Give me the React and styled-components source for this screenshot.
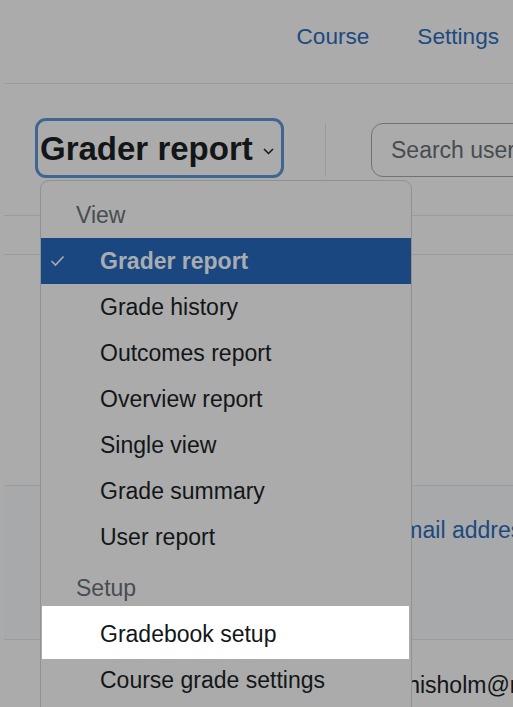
import React from "react";
import styled, { createGlobalStyle } from "styled-components";

const Global = createGlobalStyle`
  html, body { margin: 0; padding: 0; background: #ababab; overflow: hidden; }
  body { font-family: "Liberation Sans", Arial, sans-serif; color: #131618; }
  * { box-sizing: border-box; }
`;

const Page = styled.div`
  margin-left: 4px;
  width: 509px;
  height: 707px;
  overflow: hidden;
  position: relative;
`;

const NavBar = styled.nav`
  height: 84px;
  border-bottom: 1px solid #9a9b9c;
  display: flex;
  justify-content: flex-end;
  align-items: flex-start;
  gap: 48px;
  padding: 20px 14px 0 0;
`;

const NavLink = styled.a`
  font-size: 22.6px;
  line-height: 33px;
  color: #1c4a80;
  text-decoration: none;
`;

const ToolBar = styled.div`
  height: 132px;
  border-bottom: 1px solid #9a9b9c;
  display: flex;
  align-items: flex-start;
  padding: 34px 0 0 31px;
`;

const SelectorWrap = styled.div`
  position: relative;
  flex: none;
`;

const SelectorButton = styled.button`
  width: 249px;
  height: 60px;
  border: 3px solid #3f6693;
  border-radius: 11px;
  background: transparent;
  display: flex;
  align-items: center;
  padding: 0 4px 0 2px;
  font-family: inherit;
  cursor: pointer;
`;

const SelectorLabel = styled.span`
  font-size: 33px;
  font-weight: 700;
  line-height: 39px;
  color: #131618;
  white-space: nowrap;
`;

const Chevron = styled.svg`
  margin-left: auto;
  width: 11px;
  height: 7px;
  margin-top: 6px;
  margin-right: 3px;
`;

const VDivider = styled.div`
  width: 1px;
  height: 54px;
  margin: 5px 45px 0 41px;
  background: #9a9b9c;
  flex: none;
`;

const SearchBox = styled.div`
  flex: none;
  width: 300px;
  height: 54px;
  margin-top: 5px;
  border: 1px solid #707376;
  border-radius: 12px;
  display: flex;
  align-items: center;
  padding-left: 19px;
  font-size: 23px;
  color: #474c51;
  white-space: nowrap;
`;

const Table = styled.div`
  padding-top: 38px;
`;

const Row = styled.div`
  display: grid;
  grid-template-columns: 384px 1fr;
  border-top: 1px solid #9a9b9c;
  height: ${(p) => p.$h}px;
  background: ${(p) => (p.$head ? "#a8a9aa" : "transparent")};
  padding-top: ${(p) => p.$pt || 0}px;
`;

const Cell = styled.div`
  grid-column: 2;
  font-size: 23px;
  line-height: 33px;
  white-space: nowrap;
  color: ${(p) => (p.$link ? "#1c4a80" : "#131618")};
`;

const Menu = styled.div`
  position: absolute;
  left: 5px;
  top: 62px;
  width: 372px;
  border: 1px solid #919191;
  border-radius: 9px;
  background: #ababab;
  padding: 11px 0 12px;
  z-index: 5;
`;

const Group = styled.div`
  & + & { margin-top: 5px; }
`;

const Header = styled.div`
  font-size: 23px;
  line-height: 33px;
  padding: 6.5px 35px;
  color: #474d52;
`;

const Item = styled.div`
  position: relative;
  height: 46px;
  display: flex;
  align-items: center;
  padding-left: 59px;
  font-size: 23px;
  line-height: 33px;
  white-space: nowrap;
  font-weight: ${(p) => (p.$active ? 700 : 400)};
  color: ${(p) => (p.$active ? "#a9adb1" : "#131618")};
  background: ${(p) => (p.$active ? "#1a4780" : "transparent")};
`;

const Spotlight = styled.div`
  position: absolute;
  top: -5px;
  bottom: -2px;
  left: 1px;
  right: 2px;
  background: #ffffff;
`;

const ItemText = styled.span`
  position: relative;
`;

const Check = styled.svg`
  position: absolute;
  left: 9px;
  top: 17px;
  width: 15px;
  height: 12px;
`;

const viewItems = [
  "Grader report",
  "Grade history",
  "Outcomes report",
  "Overview report",
  "Single view",
  "Grade summary",
  "User report",
];

const setupItems = ["Gradebook setup", "Course grade settings"];

export default function App() {
  return (
    <>
      <Global />
      <Page>
        <NavBar>
          <NavLink href="#">Course</NavLink>
          <NavLink href="#">Settings</NavLink>
        </NavBar>
        <ToolBar>
          <SelectorWrap>
            <SelectorButton>
              <SelectorLabel>Grader report</SelectorLabel>
              <Chevron viewBox="0 0 11 7">
                <path d="M1 1 L5.5 5.5 L10 1" fill="none" stroke="#131618" strokeWidth="1.5" />
              </Chevron>
            </SelectorButton>
            <Menu>
              <Group>
                <Header>View</Header>
                {viewItems.map((t, i) => (
                  <Item key={t} $active={i === 0}>
                    {i === 0 && (
                      <Check viewBox="0 0 15 12">
                        <path d="M1.5 6 L5.5 10 L13.5 1.5" fill="none" stroke="#a9adb1" strokeWidth="1.6" />
                      </Check>
                    )}
                    <ItemText>{t}</ItemText>
                  </Item>
                ))}
              </Group>
              <Group>
                <Header>Setup</Header>
                {setupItems.map((t, i) => (
                  <Item key={t}>
                    {i === 0 && <Spotlight />}
                    <ItemText>{t}</ItemText>
                  </Item>
                ))}
              </Group>
            </Menu>
          </SelectorWrap>
          <VDivider />
          <SearchBox>Search users</SearchBox>
        </ToolBar>
        <Table>
          <Row $h={231} />
          <Row $h={154} $head $pt={28}>
            <Cell $link>Email address</Cell>
          </Row>
          <Row $h={100} $pt={29}>
            <Cell>rchisholm@moodle.invalid</Cell>
          </Row>
        </Table>
      </Page>
    </>
  );
}
